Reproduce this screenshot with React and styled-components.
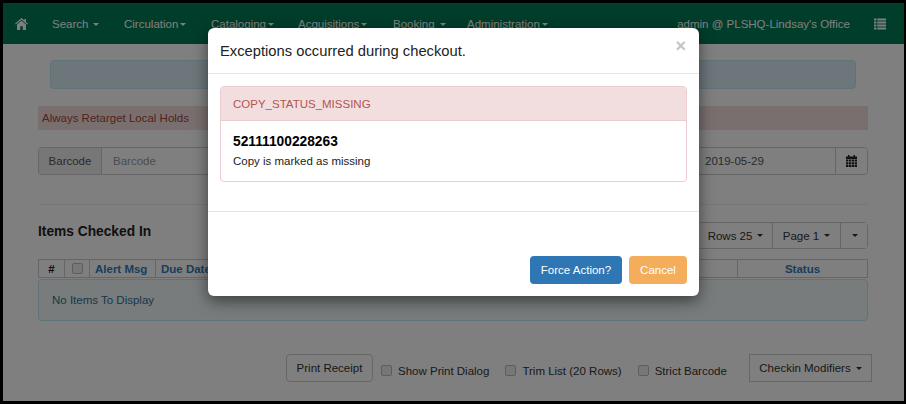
import React from "react";
import styled, {createGlobalStyle} from "styled-components";

const GlobalStyle = createGlobalStyle`
  html, body {
    margin: 0;
    padding: 0;
    background: #000;
  }
  * {
    box-sizing: border-box;
  }
`;

const HomeIcon = () => (
  <svg width="13" height="12" viewBox="0 0 13 12" fill="currentColor">
    <path d="M6.5 0 L9.4 2.5 V1 H11 V3.9 L13 5.7 L12.2 6.6 L6.5 1.7 L0.8 6.6 L0 5.7 Z" />
    <path d="M2 6.6 L6.5 2.8 L11 6.6 V12 H7.8 V8.2 H5.2 V12 H2 Z" />
  </svg>
);

const ListIcon = () => (
  <svg width="12" height="12" viewBox="0 0 12 12" fill="currentColor">
    <path d="M0 0.5H2.4V2.6H0Z M3.2 0.5H12V2.6H3.2Z M0 3.5H2.4V5.6H0Z M3.2 3.5H12V5.6H3.2Z M0 6.5H2.4V8.6H0Z M3.2 6.5H12V8.6H3.2Z M0 9.5H2.4V11.6H0Z M3.2 9.5H12V11.6H3.2Z" />
  </svg>
);

const CalendarIcon = () => (
  <svg width="11" height="12" viewBox="0 0 11 12" fill="currentColor">
    <path d="M0 1.5H2V0H3.5V1.5H7.5V0H9V1.5H11V4H0Z" />
    <path d="M0 4.6H2.4V6.6H0Z M3 4.6H5.2V6.6H3Z M5.8 4.6H8V6.6H5.8Z M8.6 4.6H11V6.6H8.6Z" />
    <path d="M0 7.2H2.4V9.2H0Z M3 7.2H5.2V9.2H3Z M5.8 7.2H8V9.2H5.8Z M8.6 7.2H11V9.2H8.6Z" />
    <path d="M0 9.8H2.4V12H0Z M3 9.8H5.2V12H3Z M5.8 9.8H8V12H5.8Z M8.6 9.8H11V12H8.6Z" />
  </svg>
);

const navItems = [
  {label: "Search", width: 72, spaced: true},
  {label: "Circulation", width: 87},
  {label: "Cataloging", width: 87},
  {label: "Acquisitions", width: 95},
  {label: "Booking", width: 74, spaced: true},
  {label: "Administration", width: 100},
];

const App = () => {
  return (
    <Frame>
      <GlobalStyle />
      <Page>
        <Navbar>
          <HomeLink><HomeIcon /></HomeLink>
          {navItems.map(item => (
            <NavItem key={item.label} $width={item.width} $spaced={item.spaced}>
              {item.label}<Caret />
            </NavItem>
          ))}
          <NavUser>admin @ PLSHQ-Lindsay's Office</NavUser>
          <NavList><ListIcon /></NavList>
        </Navbar>

        <Content>
          <InfoAlert />
          <HoldsAlert>Always Retarget Local Holds</HoldsAlert>

          <FormRow>
            <InputGroup $width={460}>
              <Addon>Barcode</Addon>
              <FakeInput>Barcode</FakeInput>
            </InputGroup>
            <InputGroup $width={180}>
              <DateInput>2019-05-29</DateInput>
              <Addon $icon><CalendarIcon /></Addon>
            </InputGroup>
          </FormRow>

          <Divider />

          <TitleRow>
            <SectionTitle>Items Checked In</SectionTitle>
            <ButtonGroup>
              <GroupButton $width={73}>Rows 25 <Caret $dark /></GroupButton>
              <GroupButton $width={68}>Page 1 <Caret $dark /></GroupButton>
              <GroupButton $width={27}><Caret $dark /></GroupButton>
            </ButtonGroup>
          </TitleRow>

          <GridHeader>
            <HeaderCell $dark>#</HeaderCell>
            <HeaderCell><Checkbox /></HeaderCell>
            <HeaderCell $start>Alert Msg</HeaderCell>
            <HeaderCell $start>Due Date</HeaderCell>
            <HeaderCell />
            <HeaderCell>Status</HeaderCell>
          </GridHeader>
          <EmptyBox>No Items To Display</EmptyBox>

          <Toolbar>
            <ToolButton $rounded $width={87}>Print Receipt</ToolButton>
            <CheckLabel $left={8}><Checkbox />Show Print Dialog</CheckLabel>
            <CheckLabel $left={16}><Checkbox />Trim List (20 Rows)</CheckLabel>
            <CheckLabel $left={16}><Checkbox />Strict Barcode</CheckLabel>
            <ToolButton $width={123} $push>Checkin Modifiers <Caret $dark /></ToolButton>
          </Toolbar>
        </Content>
      </Page>

      <Backdrop />

      <Modal>
        <ModalHeader>
          <ModalTitle>Exceptions occurred during checkout.</ModalTitle>
          <CloseButton>×</CloseButton>
        </ModalHeader>
        <ModalBody>
          <Panel>
            <PanelHeading>COPY_STATUS_MISSING</PanelHeading>
            <PanelBody>
              <CopyBarcode>52111100228263</CopyBarcode>
              <CopyMessage>Copy is marked as missing</CopyMessage>
            </PanelBody>
          </Panel>
        </ModalBody>
        <ModalFooter>
          <ActionButton $color="#2e77b4" $width={92}>Force Action?</ActionButton>
          <ActionButton $color="#f4ad5b" $width={58}>Cancel</ActionButton>
        </ModalFooter>
      </Modal>
    </Frame>
  );
}

const Frame = styled.div`
  position: relative;
  width: 906px;
  height: 404px;
  padding: 3px 2px 3px 3px;
  background: #000;
  overflow: hidden;
  font-family: "Liberation Sans", Arial, sans-serif;
  font-size: 11.5px;
  color: #333;
`;

const Page = styled.div`
  height: 100%;
  background: #fff;
  overflow: hidden;
`;

const Navbar = styled.div`
  display: flex;
  align-items: center;
  height: 41px;
  padding-left: 12px;
  background: #007a54;
  color: #fff;
`;

const HomeLink = styled.div`
  display: flex;
  width: 37px;
`;

const NavItem = styled.div`
  width: ${props => props.$width}px;
  white-space: nowrap;

  span {
    margin-left: ${props => props.$spaced ? 5 : 2}px;
  }
`;

const Caret = styled.span`
  display: inline-block;
  width: 0;
  height: 0;
  margin-left: 2px;
  vertical-align: middle;
  border-top: 3px solid ${props => props.$dark ? "#333" : "#fff"};
  border-left: 3px solid transparent;
  border-right: 3px solid transparent;
`;

const NavUser = styled.div`
  margin-left: auto;
  white-space: nowrap;
`;

const NavList = styled.div`
  display: flex;
  width: 54px;
  padding-left: 24px;
`;

const Content = styled.div`
  display: flex;
  flex-direction: column;
  padding: 0 36px 0 35px;
`;

const InfoAlert = styled.div`
  height: 29px;
  margin: 16px 12px 0;
  background: #d9edf7;
  border: 1px solid #bce8f1;
  border-radius: 4px;
`;

const HoldsAlert = styled.div`
  height: 24px;
  margin-top: 17px;
  padding-left: 4px;
  line-height: 24px;
  background: #f2dede;
  color: #a94442;
`;

const FormRow = styled.div`
  display: flex;
  justify-content: space-between;
  margin-top: 17px;
`;

const InputGroup = styled.div`
  display: flex;
  width: ${props => props.$width}px;
  height: 28px;
  border: 1px solid #ccc;
  border-radius: 4px;
  overflow: hidden;
`;

const Addon = styled.div`
  display: flex;
  align-items: center;
  justify-content: center;
  width: ${props => props.$icon ? 32 : 63}px;
  background: ${props => props.$icon ? "#fff" : "#eee"};
  color: ${props => props.$icon ? "#222" : "#555"};
  ${props => props.$icon ? "border-left: 1px solid #ccc;" : "border-right: 1px solid #ccc;"}
`;

const FakeInput = styled.div`
  flex: 1;
  padding-left: 11px;
  line-height: 26px;
  color: #999;
`;

const DateInput = styled.div`
  flex: 1;
  padding-left: 16px;
  line-height: 26px;
  color: #555;
`;

const Divider = styled.div`
  height: 1px;
  margin-top: 29px;
  background: #eee;
`;

const TitleRow = styled.div`
  display: flex;
  align-items: flex-start;
  justify-content: space-between;
  height: 27px;
  margin-top: 17px;
`;

const SectionTitle = styled.div`
  padding-top: 2px;
  font-size: 13.75px;
  font-weight: 700;
  line-height: 16px;
  color: #222;
`;

const ButtonGroup = styled.div`
  display: flex;
  height: 27px;
  border: 1px solid #ccc;
  border-radius: 4px;
`;

const GroupButton = styled.div`
  display: flex;
  align-items: center;
  justify-content: center;
  gap: 3px;
  width: ${props => props.$width}px;
  background: #fff;
  color: #333;
  border-left: 1px solid #ccc;

  &:first-child {
    border-left: 0;
  }
`;

const GridHeader = styled.div`
  display: grid;
  grid-template-columns: 25px 25px 66px 66px 516px 1fr;
  height: 19px;
  margin-top: 10px;
  border: 1px solid #ccc;
`;

const HeaderCell = styled.div`
  display: flex;
  align-items: center;
  justify-content: ${props => props.$start ? "flex-start" : "center"};
  padding-left: ${props => props.$start ? 5 : 0}px;
  font-weight: 700;
  white-space: nowrap;
  color: ${props => props.$dark ? "#222" : "#337ab7"};
  border-left: 1px solid #ccc;

  &:first-child {
    border-left: 0;
  }
`;

const Checkbox = styled.span`
  display: inline-block;
  flex: none;
  width: 11px;
  height: 11px;
  background: #eee;
  border: 1px solid #bbb;
  border-radius: 2px;
`;

const EmptyBox = styled.div`
  height: 42px;
  margin-top: 1px;
  padding-left: 13px;
  line-height: 41px;
  background: #f1f8fb;
  border: 1px solid #bce8f1;
  border-radius: 4px;
  color: #31708f;
`;

const Toolbar = styled.div`
  display: flex;
  align-items: center;
  height: 28px;
  margin: 33px -4px 0 248px;
`;

const ToolButton = styled.div`
  display: flex;
  align-items: center;
  justify-content: center;
  gap: 3px;
  width: ${props => props.$width}px;
  height: 28px;
  margin-left: ${props => props.$push ? "auto" : "0"};
  background: #fff;
  border: 1px solid #ccc;
  border-radius: ${props => props.$rounded ? 4 : 0}px;
  color: #333;
`;

const CheckLabel = styled.div`
  display: flex;
  align-items: center;
  gap: 6px;
  margin-left: ${props => props.$left}px;
  padding-top: 5px;
  white-space: nowrap;
  color: #333;
`;

const Backdrop = styled.div`
  position: absolute;
  inset: 3px 2px 3px 3px;
  background: rgba(0, 0, 0, 0.5);
`;

const Modal = styled.div`
  position: absolute;
  top: 28px;
  left: 208px;
  display: flex;
  flex-direction: column;
  width: 491px;
  height: 268px;
  background: #fff;
  border-radius: 6px;
  box-shadow: 0 5px 15px rgba(0, 0, 0, 0.5);
`;

const ModalHeader = styled.div`
  display: flex;
  align-items: center;
  justify-content: space-between;
  height: 46px;
  padding: 0 12px;
  border-bottom: 1px solid #e5e5e5;
`;

const ModalTitle = styled.div`
  font-size: 14.75px;
  color: #222;
`;

const CloseButton = styled.div`
  font-size: 18px;
  font-weight: 700;
  color: #c4c4c4;
  margin-bottom: 8px;
  margin-right: 1px;
`;

const ModalBody = styled.div`
  height: 138px;
  padding: 12px;
  border-bottom: 1px solid #e5e5e5;
`;

const Panel = styled.div`
  height: 96px;
  border: 1px solid #ebccd1;
  border-radius: 4px;
  overflow: hidden;
`;

const PanelHeading = styled.div`
  height: 34px;
  padding-left: 12px;
  line-height: 34px;
  background: #f2dede;
  border-bottom: 1px solid #ebccd1;
  color: #b35553;
`;

const PanelBody = styled.div`
  padding: 13px 12px 0;
`;

const CopyBarcode = styled.div`
  font-size: 13.75px;
  font-weight: 700;
  line-height: 16px;
  color: #000;
`;

const CopyMessage = styled.div`
  margin-top: 4px;
  line-height: 14px;
  color: #222;
`;

const ModalFooter = styled.div`
  display: flex;
  flex: 1;
  align-items: flex-end;
  justify-content: flex-end;
  gap: 7px;
  padding: 0 12px 12px;
`;

const ActionButton = styled.div`
  width: ${props => props.$width}px;
  height: 28px;
  line-height: 28px;
  text-align: center;
  background: ${props => props.$color};
  border-radius: 4px;
  color: #fff;
`;

export default App;
